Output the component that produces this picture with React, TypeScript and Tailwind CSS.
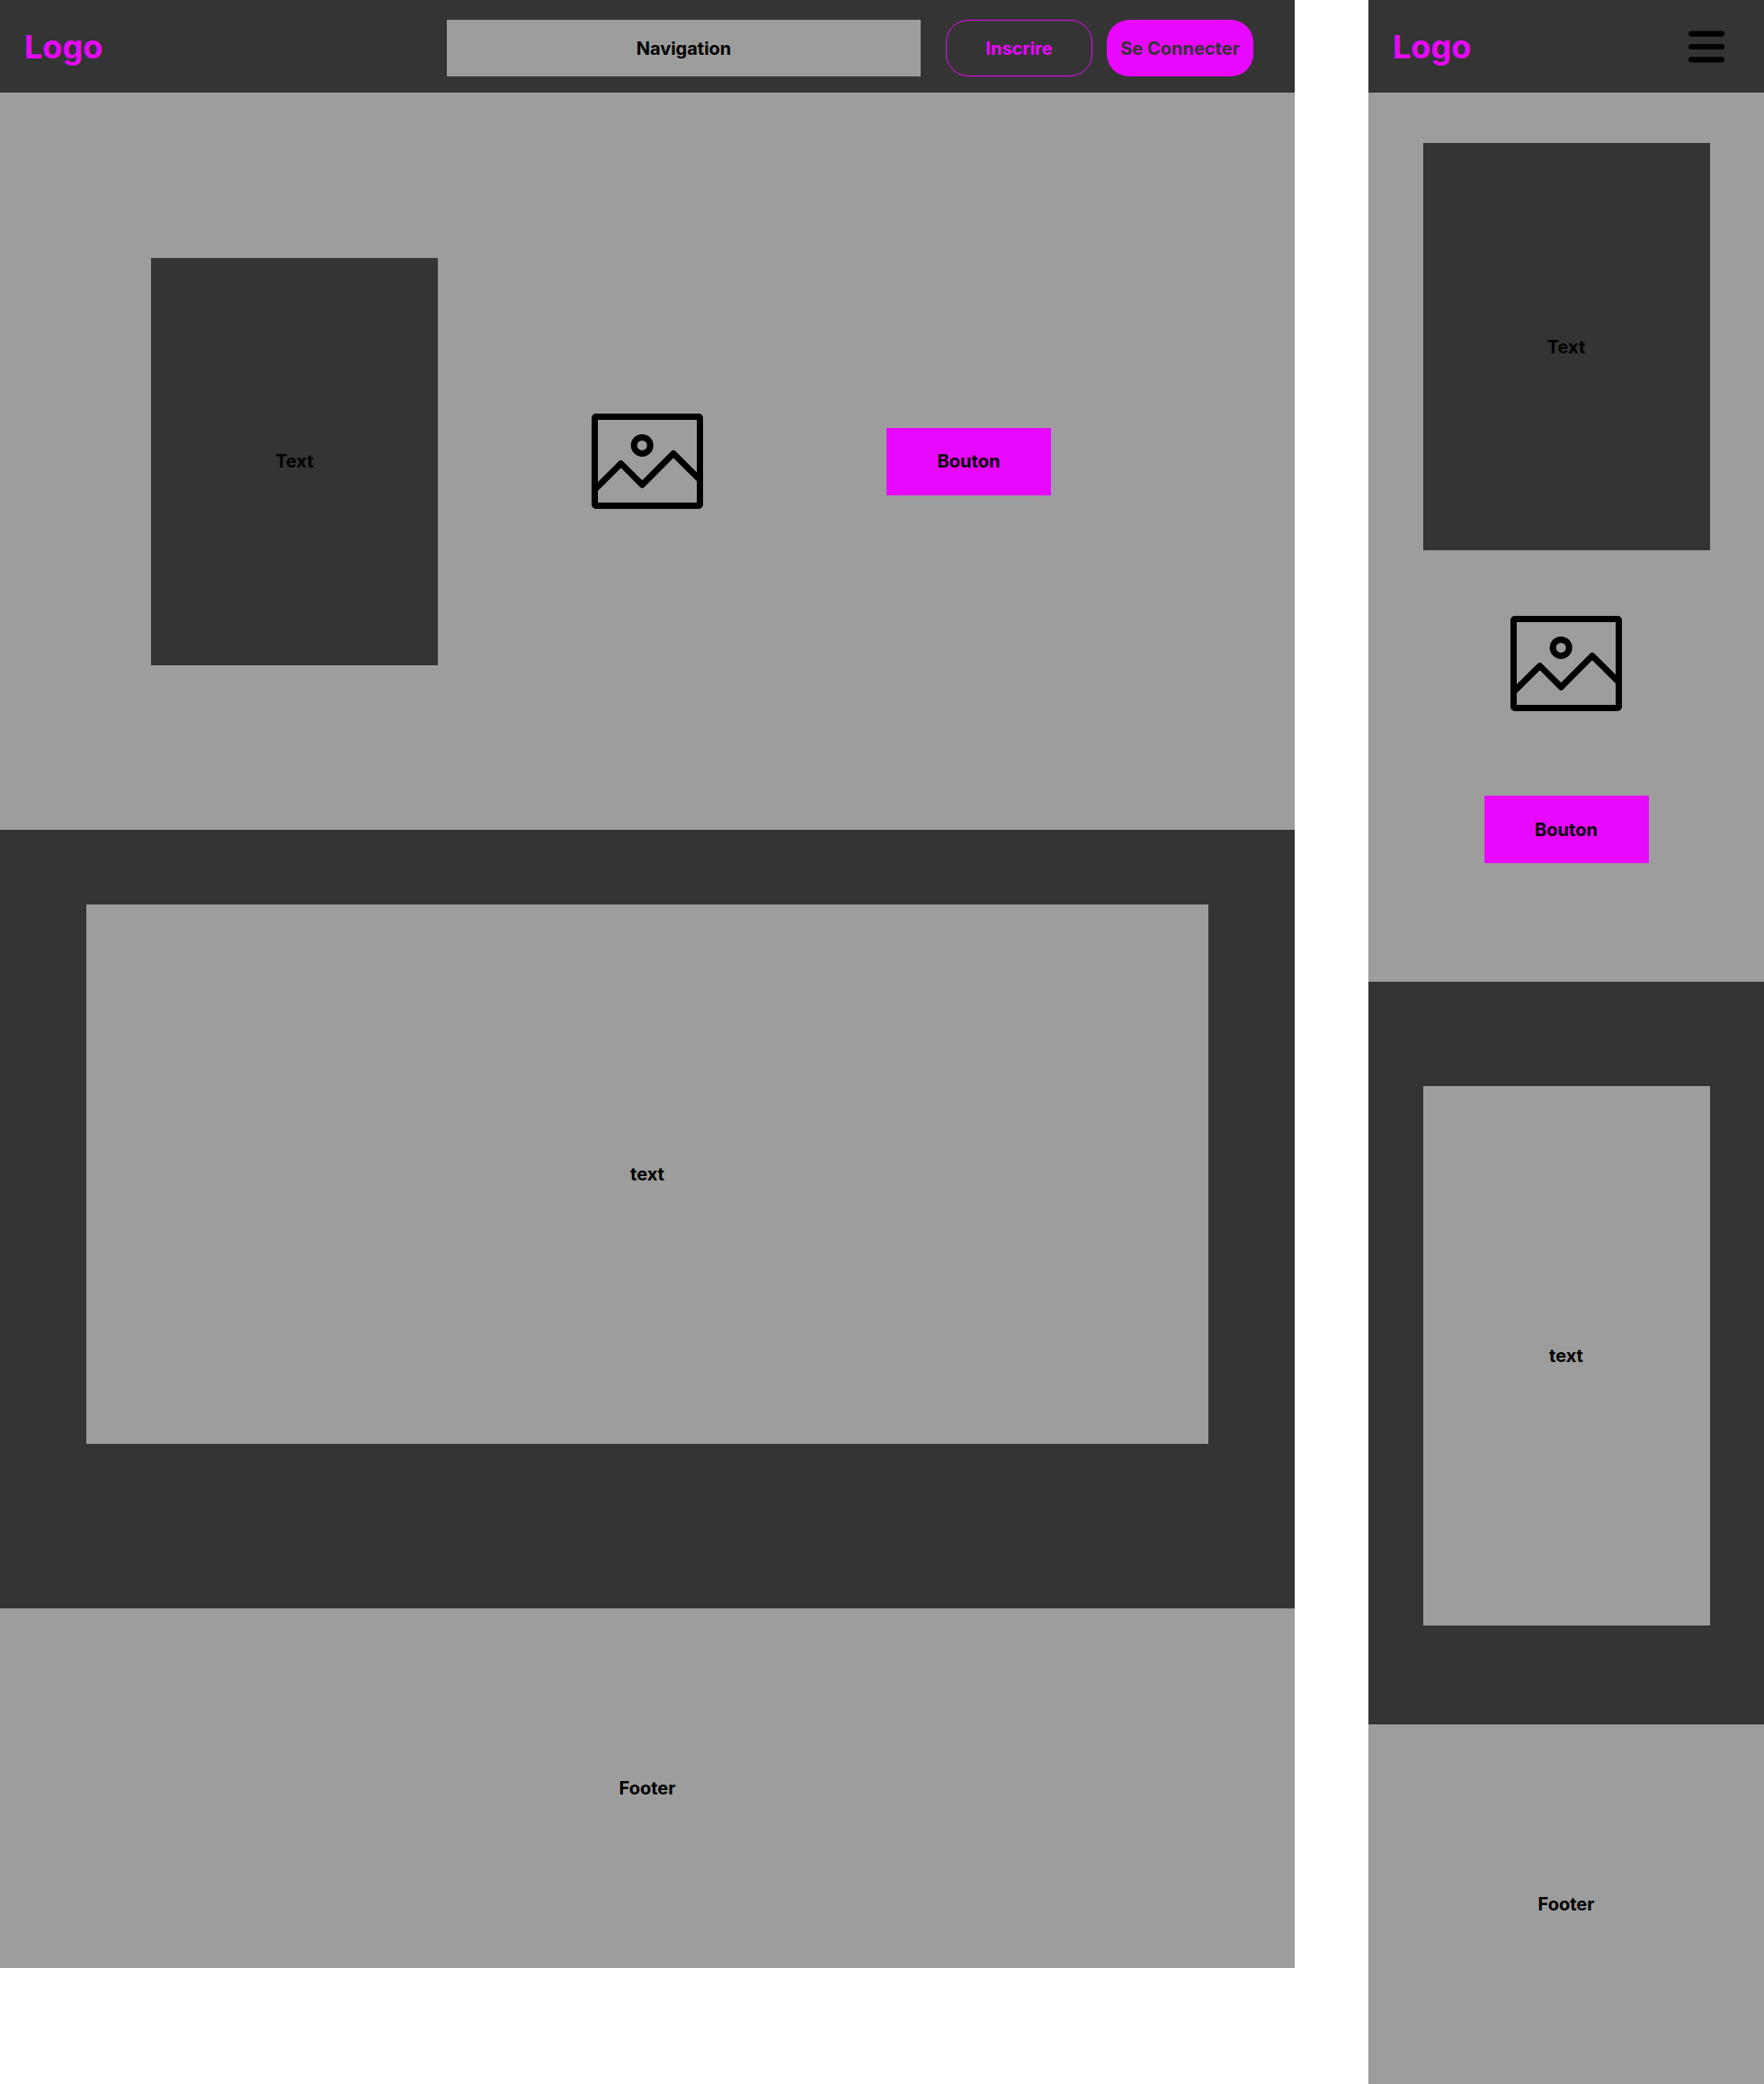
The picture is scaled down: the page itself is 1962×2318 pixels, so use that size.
function PictureIcon({ className = '' }: { className?: string }) {
  return (
    <svg
      className={`h-[106px] w-[124px] shrink-0 ${className}`}
      viewBox="0 0 124 106"
      fill="none"
      stroke="#000"
      strokeWidth="7"
      strokeLinejoin="round"
      role="img"
      aria-label="Image"
    >
      <rect x="3.5" y="3.5" width="117" height="99" rx="1.2" />
      <circle cx="56.2" cy="35.4" r="9" />
      <path d="M3.5 84.5 32.7 55.6 56.3 79.2 91 44.4 120.5 73.7" />
    </svg>
  );
}

function MenuIcon() {
  return (
    <svg
      className="h-9 w-10"
      viewBox="0 0 40 36"
      fill="none"
      stroke="#000"
      strokeWidth="6.2"
      strokeLinecap="round"
      aria-hidden="true"
    >
      <path d="M3.1 3.6H36.9M3.1 18H36.9M3.1 32.4H36.9" />
    </svg>
  );
}

function Logo() {
  return (
    <a href="#" className="text-4xl leading-[60px] text-[#e908ff]">
      Logo
    </a>
  );
}

function TextBlock() {
  return (
    <div className="flex h-[453px] w-[319px] shrink-0 items-center justify-center bg-[#343434]">
      <p>Text</p>
    </div>
  );
}

function ActionButton({ className = '' }: { className?: string }) {
  return (
    <button type="button" className={`h-[75px] w-[183px] shrink-0 bg-[#e908ff] ${className}`}>
      Bouton
    </button>
  );
}

function Footer() {
  return (
    <footer className="flex h-100 items-center justify-center bg-[#9d9d9d]">
      <p>Footer</p>
    </footer>
  );
}

function DesktopPage() {
  return (
    <div className="min-w-0 flex-1">
      <header className="flex items-start bg-[#343434] pt-[22px] pr-[46px] pb-[18px] pl-[27px]">
        <Logo />
        <nav className="ml-auto flex h-[63px] w-[527px] items-center justify-center bg-[#9d9d9d]">
          Navigation
        </nav>
        <button
          type="button"
          className="ml-7 h-[63px] w-[163px] rounded-[25px] border border-[#e908ff] text-[#e908ff]"
        >
          Inscrire
        </button>
        <button
          type="button"
          className="ml-4 h-[63px] w-[163px] rounded-[25px] bg-[#e908ff] whitespace-nowrap text-[#343434]"
        >
          Se Connecter
        </button>
      </header>
      <main>
        <section className="flex h-[820px] items-center bg-[#9d9d9d] pl-42">
          <TextBlock />
          <PictureIcon className="ml-[171px]" />
          <ActionButton className="ml-51" />
        </section>
        <section className="bg-[#343434] px-24 pt-[83px] pb-[183px]">
          <div className="flex h-150 items-center justify-center bg-[#9d9d9d]">
            <p>text</p>
          </div>
        </section>
      </main>
      <Footer />
    </div>
  );
}

function MobilePage() {
  return (
    <div className="w-110 shrink-0">
      <header className="flex items-start justify-between bg-[#343434] pt-[22px] pr-11 pb-[21px] pl-[27px]">
        <Logo />
        <button type="button" aria-label="Menu" className="flex h-15 items-center">
          <MenuIcon />
        </button>
      </header>
      <main>
        <section className="flex flex-col items-center bg-[#9d9d9d] pt-14 pb-33">
          <TextBlock />
          <PictureIcon className="mt-[73px]" />
          <ActionButton className="mt-[94px]" />
        </section>
        <section className="flex justify-center bg-[#343434] pt-29 pb-[110px]">
          <div className="flex h-150 w-[319px] items-center justify-center bg-[#9d9d9d]">
            <p>text</p>
          </div>
        </section>
      </main>
      <Footer />
    </div>
  );
}

export default function App() {
  return (
    <div className="flex items-start gap-[82px] bg-white font-['Inter',sans-serif] text-xl font-bold text-black">
      <DesktopPage />
      <MobilePage />
    </div>
  );
}
